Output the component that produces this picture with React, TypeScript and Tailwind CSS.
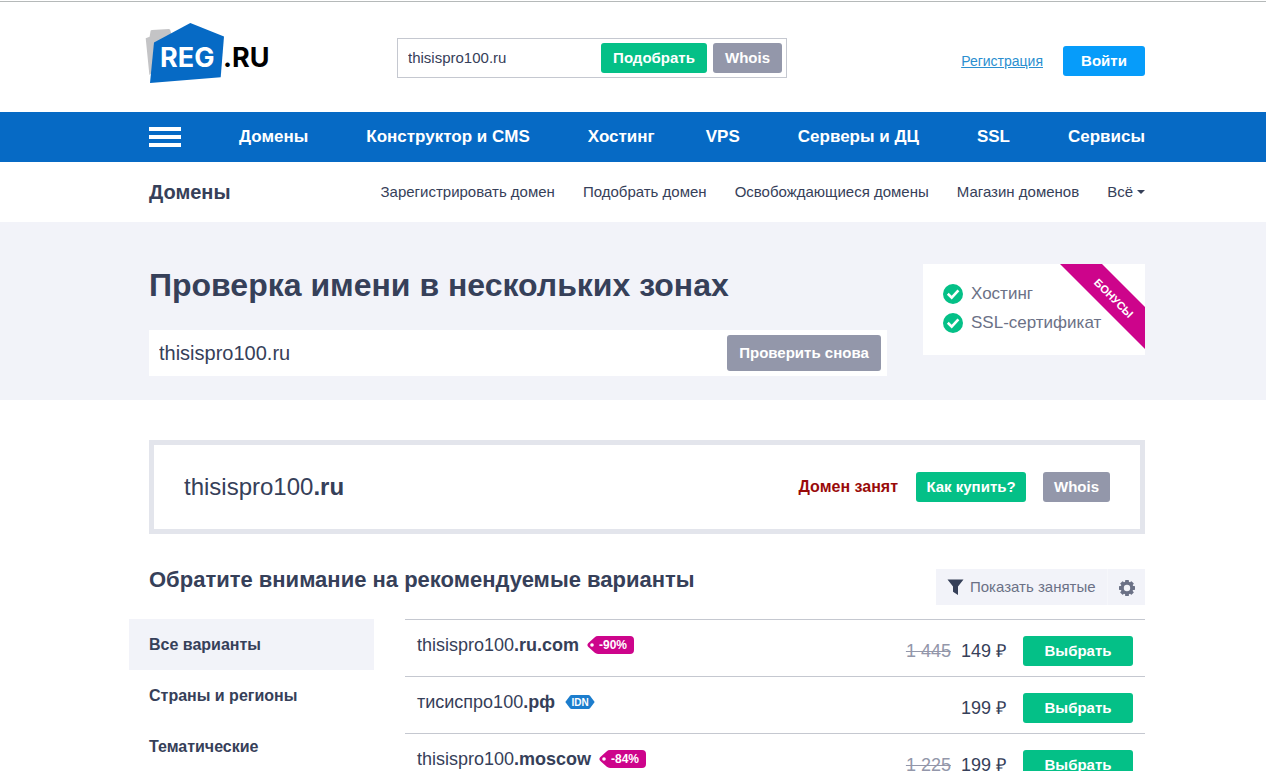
import { useState } from "react";

const NAV_LEFT = ["Домены", "Конструктор и CMS", "Хостинг"];
const NAV_RIGHT = ["VPS", "Серверы и ДЦ", "SSL", "Сервисы"];
const SUBNAV = ["Зарегистрировать домен", "Подобрать домен", "Освобождающиеся домены", "Магазин доменов"];
const BONUSES = ["Хостинг", "SSL-сертификат"];
const CATEGORIES = ["Все варианты", "Страны и регионы", "Тематические"];

const VARIANTS = [
  { name: "thisispro100", zone: ".ru.com", discount: "-90%", idn: false, oldPrice: "1 445", price: "149" },
  { name: "тисиспро100", zone: ".рф", discount: "", idn: true, oldPrice: "", price: "199" },
  { name: "thisispro100", zone: ".moscow", discount: "-84%", idn: false, oldPrice: "1 225", price: "199" },
];

const GEAR_TEETH = [0, 45, 90, 135, 180, 225, 270, 315];

function Logo() {
  return (
    <a href="#" aria-label="REG.RU" className="-ml-1 block shrink-0">
      <svg width="126" height="62" viewBox="0 0 126 62">
        <path d="M0.7 16.3 L4.6 14.8 L5.6 8.8 Q6 8 7 8 L24 7 Q25.4 7.2 25.8 10 L30 28 L4.4 53 Z" fill="#c4c4c6" />
        <path d="M45.3 1 L79 14.4 L75.7 55.2 L5 61 L9 20.4 Z" fill="#066ac5" />
        <text x="15" y="45" fontFamily="Inter, sans-serif" fontSize="27" fontWeight="700" fill="#fff">REG</text>
        <text x="78" y="45" fontFamily="Inter, sans-serif" fontSize="27" fontWeight="700" fill="#000">.RU</text>
      </svg>
    </a>
  );
}

function CheckIcon() {
  return (
    <svg width="20" height="20" viewBox="0 0 20 20" aria-hidden="true">
      <circle cx="10" cy="10" r="10" fill="#04c087" />
      <path d="M4.8 9.8 L8.7 13.6 L15.4 6.4" fill="none" stroke="#fff" strokeWidth="2.6" />
    </svg>
  );
}

function Ribbon() {
  return (
    <svg width="85" height="85" viewBox="0 0 85 85" className="absolute top-0 right-0">
      <path d="M0 0 H42 L85 43 V85 Z" fill="#cd048b" />
      <text
        transform="translate(51 37) rotate(45)"
        textAnchor="middle"
        fontFamily="Liberation Sans, Arial, sans-serif"
        fontSize="11"
        fontWeight="700"
        fill="#fff"
      >
        БОНУСЫ
      </text>
    </svg>
  );
}

function FunnelIcon() {
  return (
    <svg width="17" height="17" viewBox="0 0 17 17" aria-hidden="true">
      <path d="M0.5 0.5 H16.5 L11 7.5 V16 L6 12.8 V7.5 Z" fill="#364059" />
    </svg>
  );
}

function GearIcon() {
  return (
    <svg width="16" height="16" viewBox="0 0 16 16" aria-hidden="true">
      <circle cx="8" cy="8" r="4.8" fill="none" stroke="#6b7186" strokeWidth="3.2" />
      {GEAR_TEETH.map((a) => (
        <rect key={a} x="6.1" y="0" width="3.8" height="3" rx="0.6" fill="#6b7186" transform={`rotate(${a} 8 8)`} />
      ))}
    </svg>
  );
}

function DiscountTag({ value }: { value: string }) {
  return (
    <svg width="47" height="18" viewBox="0 0 47 18" role="img" aria-label={value}>
      <path d="M0.4 9 Q0.4 7.8 1.4 7 L7.5 1.4 Q9 0 11 0 H43 Q47 0 47 4 V14 Q47 18 43 18 H11 Q9 18 7.5 16.6 L1.4 11 Q0.4 10.2 0.4 9 Z" fill="#cd048b" />
      <circle cx="5" cy="9" r="1.8" fill="#fff" />
      <text x="12" y="13" fontFamily="Liberation Sans, Arial, sans-serif" fontSize="12" fontWeight="700" fill="#fff">
        {value}
      </text>
    </svg>
  );
}

function IdnTag() {
  return (
    <svg width="30" height="14" viewBox="0 0 30 14" role="img" aria-label="IDN">
      <path d="M0.3 7 L5 0.8 Q5.6 0 6.6 0 H23.4 Q24.4 0 25 0.8 L29.7 7 L25 13.2 Q24.4 14 23.4 14 H6.6 Q5.6 14 5 13.2 Z" fill="#1c7dcd" />
      <text x="15" y="11" textAnchor="middle" fontFamily="Liberation Sans, Arial, sans-serif" fontSize="10" fontWeight="700" fill="#fff">
        IDN
      </text>
    </svg>
  );
}

export default function App() {
  const [query, setQuery] = useState("thisispro100.ru");
  const [check, setCheck] = useState("thisispro100.ru");
  const [category, setCategory] = useState(CATEGORIES[0]);

  return (
    <div className="min-h-screen bg-white font-['Liberation_Sans',Arial,sans-serif] text-[#364059]">
      <header>
        <div className="mt-px border-t border-[#b5b9b9]">
          <div className="mx-auto flex h-[110px] max-w-5xl items-start pt-5 pl-7">
            <Logo />
            <form className="mt-4 ml-[126px] flex h-10 w-[390px] items-center gap-1.5 border border-[#c5c8d0] pr-1 pl-2.5" onSubmit={(e) => e.preventDefault()}>
              <input
                aria-label="Имя домена"
                value={query}
                onChange={(e) => setQuery(e.target.value)}
                className="min-w-0 flex-1 text-[15px] outline-none"
              />
              <button className="h-[30px] w-[106px] rounded-[3px] bg-[#04c087] text-[15px] font-bold text-white">Подобрать</button>
              <button type="button" className="h-[30px] w-[69px] rounded-[3px] bg-[#9397aa] text-[15px] font-bold text-white">Whois</button>
            </form>
            <div className="mt-6 ml-auto flex items-center gap-5">
              <a href="#" className="text-sm text-[#2b8fd0] underline">Регистрация</a>
              <button className="h-[30px] w-[82px] rounded-[3px] bg-[#069cfa] text-[15px] font-bold text-white">Войти</button>
            </div>
          </div>
        </div>

        <nav className="bg-[#066ac5]">
          <div className="mx-auto flex h-[50px] max-w-5xl items-center justify-between pl-7 text-[17px] font-bold text-white">
            <div className="flex items-center gap-[58px]">
              <button aria-label="Меню" className="flex w-8 flex-col gap-1">
                <span className="h-1 w-full bg-white" />
                <span className="h-1 w-full bg-white" />
                <span className="h-1 w-full bg-white" />
              </button>
              {NAV_LEFT.map((item) => (
                <a key={item} href="#">{item}</a>
              ))}
            </div>
            <div className="flex items-center gap-[58px]">
              {NAV_RIGHT.map((item) => (
                <a key={item} href="#">{item}</a>
              ))}
            </div>
          </div>
        </nav>

        <nav className="mx-auto flex h-[60px] max-w-5xl items-center justify-between pl-7">
          <a href="#" className="text-xl font-bold">Домены</a>
          <div className="flex gap-7 text-[15px]">
            {SUBNAV.map((item) => (
              <a key={item} href="#">{item}</a>
            ))}
            <button className="flex items-center gap-1">
              Всё
              <svg width="8" height="4" viewBox="0 0 8 4" aria-hidden="true">
                <path d="M0 0 H8 L4 4 Z" fill="#364059" />
              </svg>
            </button>
          </div>
        </nav>
      </header>

      <section className="bg-[#f2f3f9]">
        <div className="mx-auto flex h-[178px] max-w-5xl items-start gap-9 pt-[42px] pl-7">
          <div className="flex-1">
            <h1 className="text-[32px] leading-[42px] font-bold">Проверка имени в нескольких зонах</h1>
            <form className="mt-6 flex h-[46px] items-center bg-white pr-1.5 pl-2.5" onSubmit={(e) => e.preventDefault()}>
              <input
                aria-label="Проверяемое имя"
                value={check}
                onChange={(e) => setCheck(e.target.value)}
                className="min-w-0 flex-1 text-xl outline-none"
              />
              <button className="h-9 w-[154px] rounded-[3px] bg-[#9397aa] text-[15px] font-bold text-white">Проверить снова</button>
            </form>
          </div>
          <div className="relative h-[91px] w-[222px] bg-white px-5 pt-[15px]">
            <ul>
              {BONUSES.map((b) => (
                <li key={b} className="flex h-[29px] items-center gap-2 text-[17px] text-[#6b7186]">
                  <CheckIcon />
                  {b}
                </li>
              ))}
            </ul>
            <Ribbon />
          </div>
        </div>
      </section>

      <main className="mx-auto max-w-5xl pt-10 pl-7">
        <div className="flex h-[94px] items-center border-[5px] border-[#e3e5ec] px-[30px]">
          <p className="text-2xl">
            thisispro100<b>.ru</b>
          </p>
          <p className="ml-auto font-bold text-[#990a0a]">Домен занят</p>
          <button className="ml-[18px] h-[30px] w-[110px] rounded-[3px] bg-[#04c087] text-[15px] font-bold text-white">Как купить?</button>
          <button className="ml-[17px] h-[30px] w-[67px] rounded-[3px] bg-[#9397aa] text-[15px] font-bold text-white">Whois</button>
        </div>

        <div className="mt-[35px] flex h-9 items-start justify-between">
          <h2 className="text-[22px] leading-[22px] font-bold">Обратите внимание на рекомендуемые варианты</h2>
          <div className="flex h-9 bg-[#f2f3f9] text-[15px] text-[#6b7186]">
            <button className="flex w-[172px] items-center gap-1.5 border-r border-[#f6f7fb] pl-[11px]">
              <FunnelIcon />
              Показать занятые
            </button>
            <button aria-label="Настройки" className="flex w-[37px] items-center justify-center pt-0.5">
              <GearIcon />
            </button>
          </div>
        </div>

        <div className="mt-3.5 flex gap-[31px]">
          <aside className="-ml-5 w-[245px] shrink-0">
            {CATEGORIES.map((c) => (
              <button
                key={c}
                onClick={() => setCategory(c)}
                className={`flex h-[51px] w-full items-center pl-5 font-bold ${c === category ? "bg-[#f2f3f9]" : ""}`}
              >
                {c}
              </button>
            ))}
          </aside>
          <ul className="flex-1">
            {VARIANTS.map((v) => (
              <li key={v.name + v.zone} className="flex h-[57px] items-start border-t border-[#c5c8d0] pr-3 pl-3">
                <div className="flex h-[50px] items-center gap-2 text-lg">
                  <span>
                    {v.name}
                    <b>{v.zone}</b>
                  </span>
                  {v.discount && <DiscountTag value={v.discount} />}
                  {v.idn && <span className="pl-0.5"><IdnTag /></span>}
                </div>
                <div className="mt-4 ml-auto flex h-[30px] items-center text-lg">
                  {v.oldPrice && <s className="mr-2.5 text-[#9397aa]">{v.oldPrice}</s>}
                  <span>{v.price} ₽</span>
                  <button className="ml-[17px] h-[30px] w-[110px] rounded-[3px] bg-[#04c087] text-[15px] font-bold text-white">Выбрать</button>
                </div>
              </li>
            ))}
          </ul>
        </div>
      </main>
    </div>
  );
}
